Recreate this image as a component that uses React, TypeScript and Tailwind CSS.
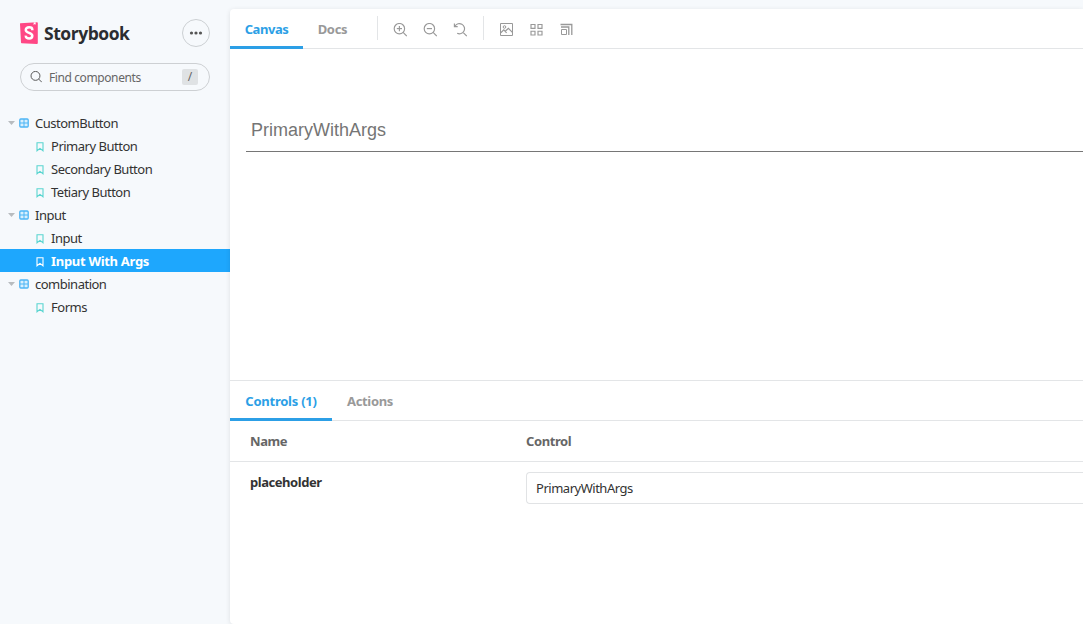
import React from "react";

const ink = "font-['Noto_Sans','Open_Sans',sans-serif]";

function Logo() {
  return (
    <svg width="18" height="22" viewBox="0 0 18 22">
      <path d="M.3 1.3 17 .2Q17.8.2 17.8 1v20q0 .9-.9.9L1.7 21.2Q1 21.2 1 20.4L0 2Q0 1.3.3 1.3Z" fill="#ff4785" />
      <path d="M13.7.4 15.6.3l.1 2.5-.9-.7-1.2.8Z" fill="#fff" />
      <path d="M12.3 8.3V7.4C12.3 5.8 11.1 5.3 9.1 5.3c-2.1 0-3.3.9-3.3 2.6 0 3.5 6.5 2.6 6.5 5.9 0 1.9-1.1 2.7-3.1 2.7-2.2 0-3.5-.8-3.4-2.9" fill="none" stroke="#fff" strokeWidth="2.5" />
    </svg>
  );
}

function SearchIcon({ sign, size = 14 }: { sign?: "plus" | "minus"; size?: number }) {
  return (
    <svg width={size} height={size} viewBox="0 0 14 14" fill="none" stroke="currentColor" strokeWidth="1.15">
      <circle cx="6.4" cy="5.7" r="5.2" />
      <path d="m10.1 9.4 3.7 3.7" />
      {sign && <path d="M3.8 5.6h5.2" />}
      {sign === "plus" && <path d="M6.4 3v5.2" />}
    </svg>
  );
}

function ResetIcon() {
  return (
    <svg width="14" height="14" viewBox="0 0 14 14" fill="none" stroke="currentColor" strokeWidth="1.15">
      <path d="M2 3.2A5.1 5.1 0 1 1 4.2 10.3M10 9.4l3.8 3.8M1.4.4v3.2h3.3" />
    </svg>
  );
}

function PhotoIcon() {
  return (
    <svg width="14" height="14" viewBox="0 0 14 14" fill="none" stroke="currentColor">
      <path d="M1.5.5h12v12h-12z" />
      <circle cx="5.5" cy="4" r="1.3" />
      <path d="m1.8 9.8 3-2.9 2.8 3M6.2 8.3l3.2-3 4 4" strokeWidth="1.2" />
    </svg>
  );
}

function GridIcon() {
  return (
    <svg width="14" height="14" viewBox="0 0 14 14" fill="none" stroke="currentColor" strokeWidth="1.15">
      <path d="M2 1.5h4v3.8H2zM9 1.5h4v3.8H9zM2 8.2h4V12H2zM9 8.2h4V12H9z" />
    </svg>
  );
}

function GrowIcon() {
  return (
    <svg width="14" height="14" viewBox="0 0 14 14" fill="none" stroke="currentColor">
      <path d="M2.5 6.5h5v5h-5z" />
      <path d="M2 4h7.8v8M1.5 1.5h11.3V12" strokeWidth="1.3" />
    </svg>
  );
}

function ComponentIcon() {
  return (
    <svg className="ml-1 h-[10px] w-[10px] shrink-0 text-[#4db5f5]" viewBox="0 0 10 10" fill="none" stroke="currentColor">
      <rect x=".8" y="1" width="8.4" height="8" rx="1" strokeWidth="1.3" fill="#d8effd" />
      <path d="M5 1v8M1 5h8" />
    </svg>
  );
}

function BookmarkIcon() {
  return (
    <svg className="mt-[2px] h-[10px] w-2 shrink-0" viewBox="0 0 8 10" fill="none" stroke="currentColor" strokeWidth="1.1">
      <path d="M1 .8h6v8L4 6.4 1 8.8Z" />
    </svg>
  );
}

function Group({ name }: { name: string }) {
  return (
    <div className="flex h-[23px] items-center pl-2">
      <svg className="h-[4px] w-[7px]" viewBox="0 0 7 4"><path d="M0 0h7L3.5 4Z" fill="#b8bcbf" /></svg>
      <ComponentIcon />
      <span className="ml-[6px] text-[13px] leading-[20px] tracking-[-0.5px]">{name}</span>
    </div>
  );
}

function Story({ name, selected = false }: { name: string; selected?: boolean }) {
  return (
    <div className={selected ? "flex h-[23px] items-center bg-[#1ea7fd] pl-9 font-bold text-white" : "flex h-[23px] items-center pl-9"}>
      <span className={selected ? "text-white" : "text-[#5ad5d0]"}><BookmarkIcon /></span>
      <span className={selected ? "ml-[7px] text-[13px] leading-[20px] tracking-[-0.3px]" : "ml-[7px] text-[13px] leading-[20px] tracking-[-0.49px]"}>{name}</span>
    </div>
  );
}

export default function App() {
  return (
    <div className={`flex h-[624px] w-full overflow-hidden bg-[#f6f9fc] text-[#333] ${ink}`}>
      <aside className="w-[230px] shrink-0">
        <header className="mt-[19px] flex h-[28px] items-center justify-between px-5">
          <div className="flex items-center">
            <Logo />
            <span className="ml-[6px] font-['Open_Sans',sans-serif] text-[17.5px] leading-[24px] font-bold tracking-[-0.45px] text-[#2b2d31]">Storybook</span>
          </div>
          <button className="flex h-7 w-7 items-center justify-center rounded-full border border-[#ccd0d3]">
            <svg width="14" height="4" viewBox="0 0 14 4" fill="#555">
              <circle cx="2.5" cy="2" r="1.6" /><circle cx="7" cy="2" r="1.6" /><circle cx="11.5" cy="2" r="1.6" />
            </svg>
          </button>
        </header>
        <div className="mx-5 mt-4 flex h-7 items-center rounded-full border border-[#cdd0d3] pr-[11px] pl-[9px] text-[#555]">
          <SearchIcon size={12} />
          <span className="ml-[7px] pt-px text-[12px] tracking-[-0.4px] text-[#666]">Find components</span>
          <kbd className="ml-auto flex h-4 w-4 items-center justify-center rounded-[2px] bg-[#dfe2e4] font-['Noto_Sans',sans-serif] text-[12px] text-[#666]">/</kbd>
        </div>
        <nav className="mt-5">
          <Group name="CustomButton" />
          <Story name="Primary Button" />
          <Story name="Secondary Button" />
          <Story name="Tetiary Button" />
          <Group name="Input" />
          <Story name="Input" />
          <Story name="Input With Args" selected />
          <Group name="combination" />
          <Story name="Forms" />
        </nav>
      </aside>
      <main className="mt-[9px] flex min-w-0 flex-1 flex-col rounded-l-[4px] bg-white shadow-[0_1px_5px_rgba(0,0,0,0.1)]">
        <div className="flex h-10 shrink-0 border-b border-[#e3e5e7] text-[13px] font-bold text-[#999]">
          <button className="h-10 w-[73px] border-b-[3px] border-[#2c9fe6] pt-1 tracking-[-0.45px] text-[#2c9fe6]">Canvas</button>
          <button className="h-10 w-[59px] border-b-[3px] border-transparent pt-1 tracking-[-0.3px]">Docs</button>
          <div className="mt-[7px] ml-[15px] h-6 w-px bg-[#e3e5e7]" />
          <div className="ml-[15px] flex items-center gap-4 pt-[2px]"><SearchIcon sign="plus" /><SearchIcon sign="minus" /><ResetIcon /></div>
          <div className="mt-[7px] ml-[16px] h-6 w-px bg-[#e3e5e7]" />
          <div className="ml-[15px] flex items-center gap-4 pt-[2px]"><PhotoIcon /><GridIcon /><GrowIcon /></div>
        </div>
        <section className="h-[331px] shrink-0 pt-[60px] pl-4">
          <div className="h-[43px] border-b border-[#767676] pt-[7px] pl-[5px] font-['Liberation_Sans',sans-serif] text-[18px] leading-[28px] text-[#757575]">PrimaryWithArgs</div>
        </section>
        <section className="border-t border-[#e3e5e7] text-[13px]">
          <div className="flex h-10 border-b border-[#e3e5e7] font-bold text-[#999]">
            <button className="h-10 w-[102px] border-b-[3px] border-[#2c9fe6] pt-1 tracking-[-0.25px] text-[#2c9fe6]">Controls (1)</button>
            <button className="h-10 w-[76px] border-b-[3px] border-transparent pt-1 tracking-[-0.35px]">Actions</button>
          </div>
          <div className="grid h-[41px] grid-cols-[276px_1fr] items-center border-b border-[#e3e5e7] pt-[2px] pl-5 font-bold tracking-[-0.4px] text-[#666]"><span>Name</span><span>Control</span></div>
          <div className="grid grid-cols-[276px_1fr] pt-[10px] pl-5">
            <span className="pt-px font-bold tracking-[-0.45px]">placeholder</span>
            <div className="flex h-8 items-center rounded-l-[4px] border border-r-0 border-[#e1e3e5] pt-[2px] pl-[9px] tracking-[-0.48px]">PrimaryWithArgs</div>
          </div>
        </section>
      </main>
    </div>
  );
}
